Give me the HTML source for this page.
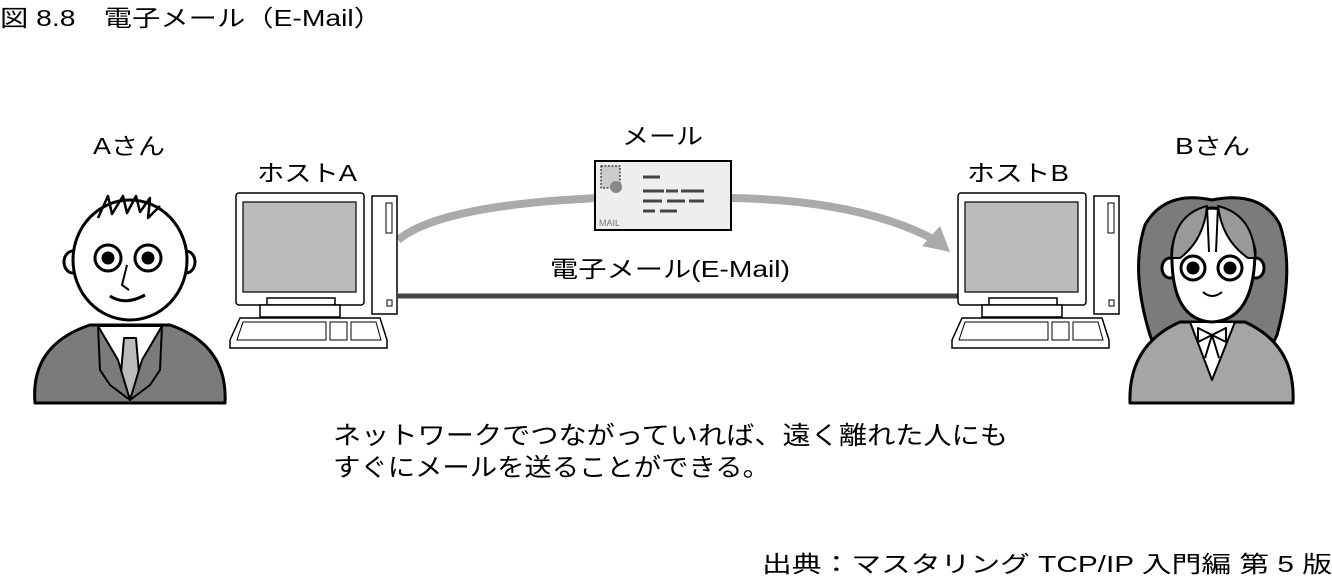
<!DOCTYPE html>
<html><head><meta charset="utf-8"><style>
html,body{margin:0;padding:0;background:#fff;width:1332px;height:579px;overflow:hidden}
svg{display:block}
text{font-family:"Liberation Sans","Noto Sans CJK JP",sans-serif;fill:#000}
</style></head><body>
<svg width="1332" height="579" viewBox="0 0 1332 579" xmlns="http://www.w3.org/2000/svg">
<text x="0" y="26" font-size="23" textLength="382" lengthAdjust="spacingAndGlyphs">図 8.8　電子メール（E-Mail）</text>
<text x="93" y="154" font-size="23" textLength="72" lengthAdjust="spacingAndGlyphs">Aさん</text>
<text x="257" y="181" font-size="23" textLength="100" lengthAdjust="spacingAndGlyphs">ホストA</text>
<text x="622" y="144" font-size="23" textLength="81" lengthAdjust="spacingAndGlyphs">メール</text>
<text x="967" y="181" font-size="23" textLength="102" lengthAdjust="spacingAndGlyphs">ホストB</text>
<text x="1175" y="154" font-size="23" textLength="75" lengthAdjust="spacingAndGlyphs">Bさん</text>
<text x="550" y="277" font-size="23" textLength="240" lengthAdjust="spacingAndGlyphs">電子メール(E-Mail)</text>
<text x="333" y="444" font-size="25" textLength="675" lengthAdjust="spacingAndGlyphs">ネットワークでつながっていれば、遠く離れた人にも</text>
<text x="333" y="476" font-size="25" textLength="437" lengthAdjust="spacingAndGlyphs">すぐにメールを送ることができる。</text>
<text x="762" y="572" font-size="23" textLength="570" lengthAdjust="spacingAndGlyphs">出典：マスタリング TCP/IP 入門編 第 5 版</text>

<path d="M398 240 Q440 205 600 198 M730 198 Q860 200 935 240" fill="none" stroke="#aaa" stroke-width="8"/>
<polygon points="950,252 922,246 940,226" fill="#aaa"/>
<line x1="398" y1="296" x2="960" y2="296" stroke="#444" stroke-width="5"/>

<rect x="595" y="161" width="136" height="69" fill="#eee" stroke="#000" stroke-width="2"/>
<rect x="601" y="166" width="19" height="22" fill="#ccc" stroke="#000" stroke-dasharray="2 1.5"/>
<circle cx="616" cy="187" r="6" fill="#888"/>
<g stroke="#444" stroke-width="3"><line x1="643" y1="177" x2="660" y2="177"/><line x1="643" y1="191" x2="664" y2="191"/><line x1="666" y1="191" x2="678" y2="191"/><line x1="681" y1="191" x2="704" y2="191"/>
<line x1="643" y1="201" x2="662" y2="201"/><line x1="667" y1="201" x2="685" y2="201"/><line x1="689" y1="201" x2="704" y2="201"/>
<line x1="643" y1="211" x2="655" y2="211"/><line x1="660" y1="211" x2="677" y2="211"/></g>
<text x="599" y="226" font-size="9" style="fill:#777">MAIL</text>

<g id="pc" stroke="#000" stroke-width="1.5">
<rect x="236" y="193" width="128" height="112" rx="3" fill="#fff"/>
<rect x="243" y="202" width="113" height="90" fill="#bcbcbc" stroke-width="1.2"/>
<rect x="267" y="298" width="68" height="7" fill="#fff"/>
<rect x="260" y="305" width="80" height="12" fill="#fff"/>
<rect x="372" y="196" width="25" height="118" fill="#fff"/>
<rect x="386" y="203" width="6" height="30" fill="#fff" stroke-width="1"/>
<rect x="387" y="300" width="5" height="6" fill="#fff" stroke-width="1"/>
<path d="M240 318 L380 318 L387 340 L387 348 L230 348 L230 340 Z" fill="#fff"/>
<path d="M243 322 L326 322 L326 340 L237 340 Z" fill="#fff" stroke-width="1"/>
<rect x="330" y="322" width="17" height="18" fill="#fff" stroke-width="1"/>
<path d="M351 322 L376 322 L381 340 L351 340 Z" fill="#fff" stroke-width="1"/>
</g>
<use href="#pc" transform="translate(722,0)"/>

<g stroke="#000" stroke-width="3" stroke-linejoin="round">
<path d="M35 403 Q30 345 90 325 L170 325 Q228 345 225 403 Z" fill="#7b7b7b"/>
<path d="M98 326 L130 390 L162 326 Z" fill="#fff" stroke-width="2"/>
<path d="M124 338 L136 338 L140 385 L130 397 L120 385 Z" fill="#bbb" stroke-width="2"/>
<path d="M98 326 L100 370 L110 385 L130 400 L118 360 Z M162 326 L160 370 L150 385 L130 400 L142 360 Z" fill="#7b7b7b" stroke-width="2"/>
<ellipse cx="73" cy="262" rx="9" ry="11" fill="#fff"/>
<ellipse cx="186" cy="262" rx="9" ry="11" fill="#fff"/>
<ellipse cx="130" cy="260" rx="57" ry="60" fill="#fff"/>
<path d="M98 218 L108 196 L112 214 L123 196 L127 213 L136 196 L140 212 L150 198 L148 218 L160 206" fill="none" stroke-width="2.5"/>
<circle cx="108" cy="258" r="13" fill="#fff"/><circle cx="108" cy="258" r="5" fill="#000"/>
<circle cx="148" cy="258" r="13" fill="#fff"/><circle cx="148" cy="258" r="5" fill="#000"/>
<path d="M127 265 L122 285 L129 290" fill="none" stroke-width="2"/>
<path d="M110 296 Q125 306 145 295" fill="none"/>
</g>

<g stroke="#000" stroke-width="3" stroke-linejoin="round">
<path d="M1150 335 Q1130 270 1145 225 Q1165 190 1212 200 Q1262 190 1280 225 Q1295 270 1277 335 Q1262 368 1240 370 L1185 370 Q1160 365 1150 335 Z" fill="#7b7b7b"/>
<path d="M1130 403 Q1128 345 1180 322 L1245 322 Q1296 345 1293 403 Z" fill="#a5a5a5"/>
<path d="M1190 322 L1212 380 L1235 322 Z" fill="#fff" stroke-width="2"/>
<ellipse cx="1170" cy="268" rx="8" ry="10" fill="#fff"/>
<ellipse cx="1256" cy="268" rx="8" ry="10" fill="#fff"/>
<path d="M1172 250 Q1170 320 1212 322 Q1255 320 1255 250 Q1245 210 1212 208 Q1178 210 1172 250 Z" fill="#fff"/>
<path d="M1172 258 Q1172 215 1207 206 Q1204 240 1180 258 Z M1255 258 Q1254 215 1218 206 Q1222 240 1248 258 Z" fill="#999" stroke-width="2"/>
<path d="M1207 206 L1209 252 M1218 206 L1216 252" fill="none" stroke-width="2"/>
<circle cx="1193" cy="268" r="12" fill="#fff"/><circle cx="1193" cy="268" r="5" fill="#000"/>
<circle cx="1230" cy="268" r="12" fill="#fff"/><circle cx="1230" cy="268" r="5" fill="#000"/>
<path d="M1203 292 Q1212 300 1222 292" fill="none" stroke-width="2"/>
<path d="M1212 335 L1198 328 L1198 342 Z M1212 335 L1226 328 L1226 342 Z M1212 335 L1205 358 M1212 335 L1219 358" fill="none" stroke-width="2"/>
</g>
</svg>
</body></html>
